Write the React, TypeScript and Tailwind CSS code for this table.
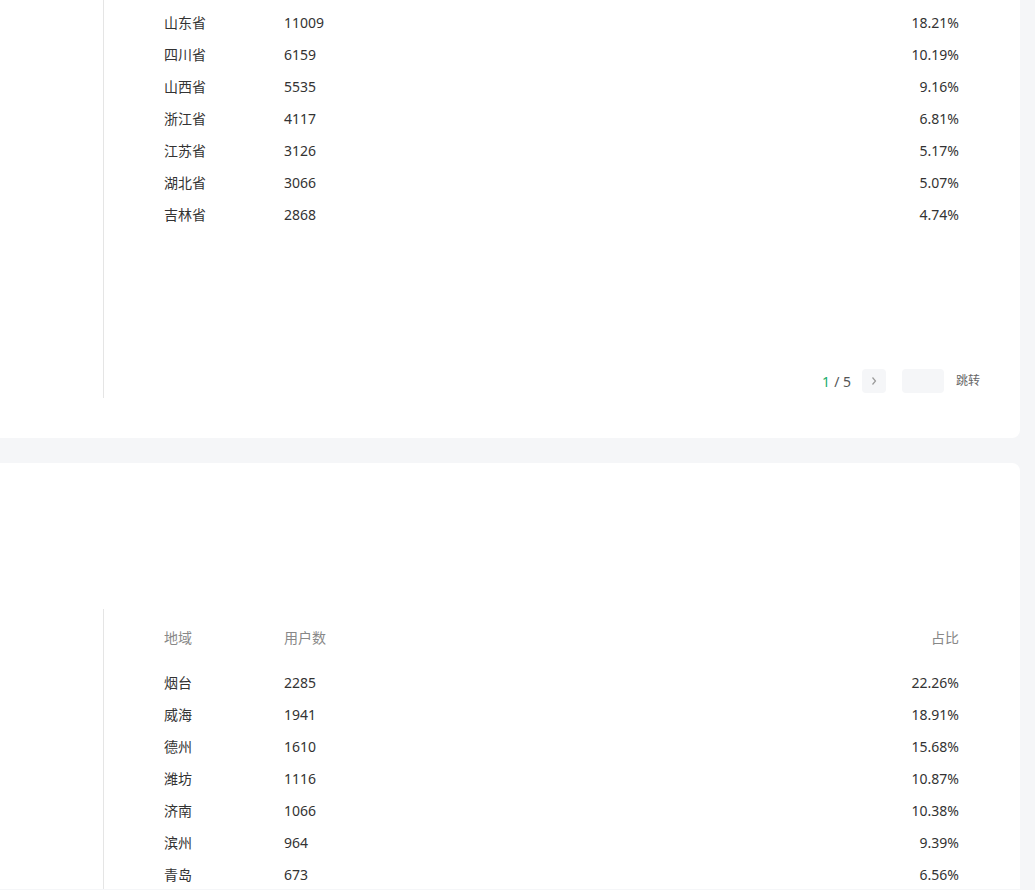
const font = { fontFamily: '"Noto Sans", "Noto Sans CJK SC", sans-serif' };

const provinces = [
  { name: "山东省", users: 11009, pct: "18.21%" },
  { name: "四川省", users: 6159, pct: "10.19%" },
  { name: "山西省", users: 5535, pct: "9.16%" },
  { name: "浙江省", users: 4117, pct: "6.81%" },
  { name: "江苏省", users: 3126, pct: "5.17%" },
  { name: "湖北省", users: 3066, pct: "5.07%" },
  { name: "吉林省", users: 2868, pct: "4.74%" },
];

const cities = [
  { name: "烟台", users: 2285, pct: "22.26%" },
  { name: "威海", users: 1941, pct: "18.91%" },
  { name: "德州", users: 1610, pct: "15.68%" },
  { name: "潍坊", users: 1116, pct: "10.87%" },
  { name: "济南", users: 1066, pct: "10.38%" },
  { name: "滨州", users: 964, pct: "9.39%" },
  { name: "青岛", users: 673, pct: "6.56%" },
];

type Row = { name: string; users: number; pct: string };

function Rows({ rows }: { rows: Row[] }) {
  return (
    <>
      {rows.map((r) => (
        <div key={r.name} className="flex items-center h-8 text-[14px] text-[#333]">
          <div className="w-[120px]">{r.name}</div>
          <div className="flex-1">{r.users}</div>
          <div className="text-right">{r.pct}</div>
        </div>
      ))}
    </>
  );
}

export default function App() {
  return (
    <div className="w-[1035px] h-[890px] overflow-hidden bg-[#f5f6f8]" style={font}>
      {/* top card, scrolled */}
      <div className="w-[1020px] h-[438px] bg-white rounded-br-lg pl-[103px]">
        <div className="h-[398px] border-l border-[#e5e5e5] pl-[60px] pr-[61px] pt-[6px] flex flex-col">
          <Rows rows={provinces} />
          <div className="mt-auto flex items-center justify-end -mr-[21px] mb-[5px] text-[14px]">
            <span className="text-[#1aad6b]">1</span>
            <span className="text-[#555] ml-1">/ 5</span>
            <button className="ml-[11px] w-6 h-6 rounded bg-[#f5f6f8] flex items-center justify-center text-[#999]">
              <svg width="8" height="10" viewBox="0 0 8 10" fill="none" stroke="currentColor" strokeWidth="1.2">
                <path d="M2.5 1.5 L5.5 5 L2.5 8.5" />
              </svg>
            </button>
            <div className="ml-4 w-[42px] h-6 rounded bg-[#f5f6f8]" />
            <span className="ml-3 text-[12px] text-[#666]">跳转</span>
          </div>
        </div>
      </div>

      {/* bottom card */}
      <div className="mt-[25px] w-[1020px] h-[426px] bg-white rounded-tr-lg pl-[103px] pt-[146px]">
        <div className="h-full border-l border-[#e5e5e5] pl-[60px] pr-[61px] pt-[12px]">
          <div className="flex items-center h-8 text-[14px] text-[#888] mb-[13px]">
            <div className="w-[120px]">地域</div>
            <div className="flex-1">用户数</div>
            <div className="text-right">占比</div>
          </div>
          <Rows rows={cities} />
        </div>
      </div>
    </div>
  );
}
